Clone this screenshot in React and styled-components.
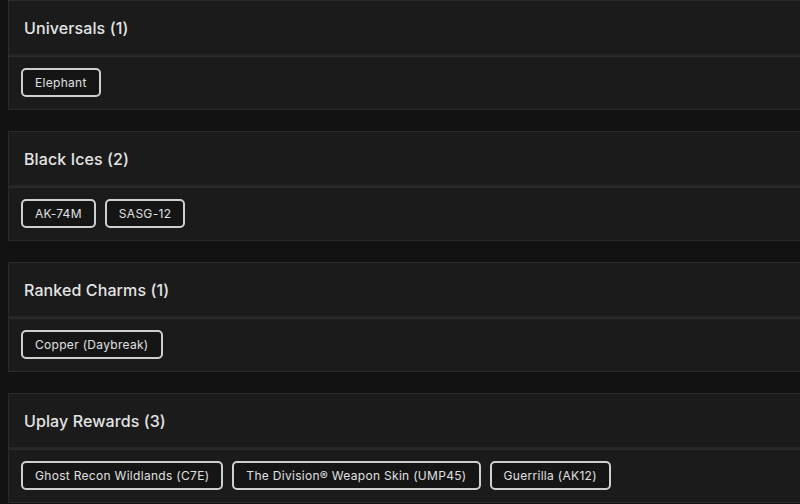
import React from "react";
import styled, { createGlobalStyle } from "styled-components";

const Global = createGlobalStyle`
  html, body { margin: 0; padding: 0; background: #121212; }
  body { font-family: "Inter", "Noto Sans", sans-serif; color: #e2e2e2; overflow: hidden; }
`;

const Page = styled.div`
  display: flex;
  flex-direction: column;
  gap: 21px;
  padding: 0 0 0 8px;
  width: 820px;
`;

const Card = styled.section`
  background: #1b1b1b;
  border: 1px solid #2a2a2a;
  border-right: none;
`;

const Header = styled.div`
  height: 53px;
  display: flex;
  align-items: center;
  padding: 0 15px;
  border-bottom: 2px solid #262626;
  box-shadow: 0 1px 0 #2c2c2c;
`;

const Title = styled.h2`
  margin: 0;
  font-size: 16px;
  font-weight: 500;
  color: #e4e4e4;
  letter-spacing: 0.1px;
`;

const Body = styled.div`
  display: flex;
  flex-wrap: wrap;
  gap: 9px;
  padding: 12px 12px 12px;
`;

const Chip = styled.span`
  display: inline-block;
  padding: 6px 12px;
  line-height: 13px;
  font-size: 12px;
  letter-spacing: 0.3px;
  color: #e0e0e0;
  border: 2px solid #cfcfcf;
  border-radius: 5px;
  background: #151515;
`;

const groups = [
  { title: "Universals (1)", items: ["Elephant"] },
  { title: "Black Ices (2)", items: ["AK-74M", "SASG-12"] },
  { title: "Ranked Charms (1)", items: ["Copper (Daybreak)"] },
  {
    title: "Uplay Rewards (3)",
    items: ["Ghost Recon Wildlands (C7E)", "The Division® Weapon Skin (UMP45)", "Guerrilla (AK12)"],
  },
];

export default function App() {
  return (
    <>
      <Global />
      <Page>
        {groups.map((g) => (
          <Card key={g.title}>
            <Header>
              <Title>{g.title}</Title>
            </Header>
            <Body>
              {g.items.map((i) => (
                <Chip key={i}>{i}</Chip>
              ))}
            </Body>
          </Card>
        ))}
      </Page>
    </>
  );
}
